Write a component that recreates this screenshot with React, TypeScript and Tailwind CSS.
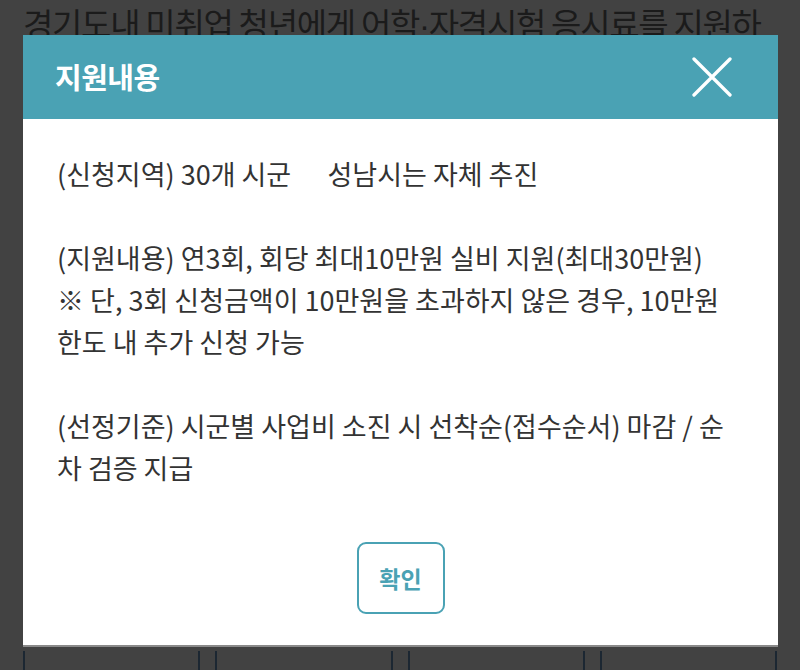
const FONT = { fontFamily: '"Noto Sans CJK KR", "Noto Sans", sans-serif' };

const PARAGRAPHS = [
  ['(신청지역) 30개 시군\u00a0\u00a0\u00a0\u00a0\u00a0\u00a0성남시는 자체 추진'],
  ['(지원내용) 연3회, 회당 최대10만원 실비 지원(최대30만원)', '※ 단, 3회 신청금액이 10만원을 초과하지 않은 경우, 10만원', '한도 내 추가 신청 가능'],
  ['(선정기준) 시군별 사업비 소진 시 선착순(접수순서) 마감 / 순', '차 검증 지급'],
];

function CloseIcon() {
  return (
    <svg width="40" height="40" viewBox="0 0 40 40" fill="none" stroke="white" strokeWidth="3.3" strokeLinecap="round">
      <path d="M2 2 38 38M38 2 2 38" />
    </svg>
  );
}

export default function App() {
  return (
    <div className="relative w-[800px] h-[670px] overflow-hidden bg-[#424242]" style={FONT}>
      {/* page behind the overlay */}
      <div className="px-[23px] pt-0">
        <h1 className="text-[33px] leading-[46px] tracking-[-1.3px] text-[#1b1b1b] whitespace-nowrap">
          경기도내 미취업 청년에게 어학<span style={{ fontFamily: '"Liberation Sans", sans-serif' }}>·</span>자격시험 응시료를 지원하
        </h1>
        <div className="mt-[602px] grid grid-cols-4 gap-[15px]">
          {[0, 1, 2, 3].map(i => (
            <div key={i} className="h-[40px] border-x-2 border-[#1c2732]" />
          ))}
        </div>
      </div>

      {/* modal */}
      <div className="absolute left-[23px] top-[35px] w-[755px] bg-white border-b-2 border-[#8a8a8a]">
        <div className="h-[84px] bg-[#4aa2b4] flex items-center justify-between pl-[32px] pr-[46px]">
          <h2 className="text-[29px] font-bold text-white tracking-[-0.5px]">지원내용</h2>
          <CloseIcon />
        </div>
        <div className="px-[34px] pt-[34px] text-[27px] leading-[42px] text-[#333]">
          {PARAGRAPHS.map((lines, i) => (
            <p key={i} className="mb-[42px] last:mb-0">
              {lines.map(l => (
                <span key={l} className="block whitespace-nowrap">{l}</span>
              ))}
            </p>
          ))}
        </div>
        <div className="flex justify-center pt-[53px] pb-[31px]">
          <button className="w-[88px] h-[72px] rounded-[9px] border-2 border-[#4aa2b4] text-[#4aa2b4] text-[23px] font-bold">
            확인
          </button>
        </div>
      </div>
    </div>
  );
}
